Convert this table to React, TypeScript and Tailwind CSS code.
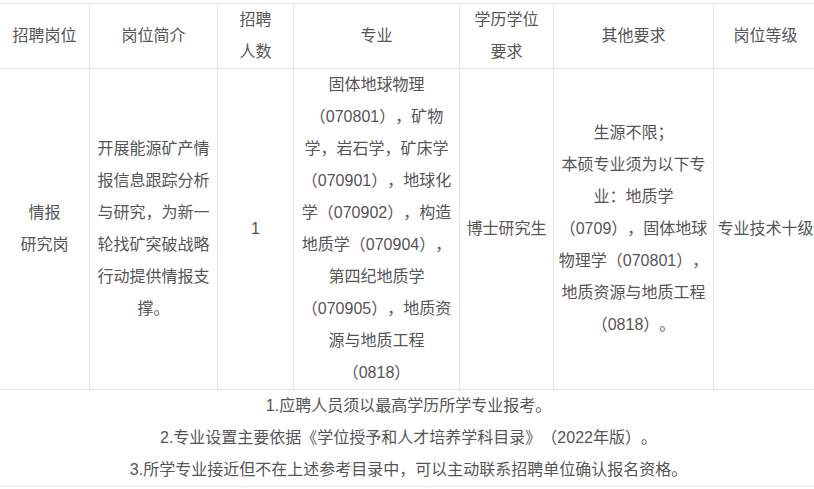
const HEAD: { lines: string[] }[] = [
  { lines: ["招聘岗位"] },
  { lines: ["岗位简介"] },
  { lines: ["招聘", "人数"] },
  { lines: ["专业"] },
  { lines: ["学历学位", "要求"] },
  { lines: ["其他要求"] },
  { lines: ["岗位等级"] },
];

const BODY: string[][] = [
  ["情报", "研究岗"],
  ["开展能源矿产情", "报信息跟踪分析", "与研究，为新一", "轮找矿突破战略", "行动提供情报支", "撑。"],
  ["1"],
  [
    "固体地球物理",
    "（070801），矿物",
    "学，岩石学，矿床学",
    "（070901），地球化",
    "学（070902），构造",
    "地质学（070904），",
    "第四纪地质学",
    "（070905），地质资",
    "源与地质工程",
    "（0818）",
  ],
  ["博士研究生"],
  [
    "生源不限；",
    "本硕专业须为以下专",
    "业：地质学",
    "（0709），固体地球",
    "物理学（070801），",
    "地质资源与地质工程",
    "（0818）。",
  ],
  ["专业技术十级"],
];

const NOTES = [
  "1.应聘人员须以最高学历所学专业报考。",
  "2.专业设置主要依据《学位授予和人才培养学科目录》（2022年版）。",
  "3.所学专业接近但不在上述参考目录中，可以主动联系招聘单位确认报名资格。",
];

function Cell({ lines, first }: { lines: string[]; first?: boolean }) {
  return (
    <div
      className={
        "flex flex-col items-center justify-center text-center " +
        (first ? "" : "border-l border-[#e5e5e5]")
      }
    >
      {lines.map((l, i) => (
        <span key={i} className="whitespace-nowrap">
          {l}
        </span>
      ))}
    </div>
  );
}

export default function App() {
  return (
    <div className="w-[814px] h-[489px] overflow-hidden bg-white pt-[3px]">
      <div
        className="w-[817px] border-t border-[#e5e5e5] text-[16px] leading-[32px] text-[#555] [text-spacing-trim:space-all]"
        style={{ fontFamily: '"Liberation Sans", "Noto Sans CJK SC", sans-serif' }}
      >
        {/* header */}
        <div className="grid grid-cols-[89px_128px_76px_166px_94px_160px_104px] h-[65px] border-b border-[#e5e5e5]">
          {HEAD.map((h, i) => (
            <Cell key={i} lines={h.lines} first={i === 0} />
          ))}
        </div>

        {/* body */}
        <div className="grid grid-cols-[89px_128px_76px_166px_94px_160px_104px] h-[321px] border-b border-[#e5e5e5]">
          {BODY.map((b, i) => (
            <Cell key={i} lines={b} first={i === 0} />
          ))}
        </div>

        {/* notes */}
        <div className="flex flex-col items-center h-[97px] border-b border-[#e5e5e5]">
          {NOTES.map((n) => (
            <p key={n} className="whitespace-nowrap">
              {n}
            </p>
          ))}
        </div>
      </div>
    </div>
  );
}
